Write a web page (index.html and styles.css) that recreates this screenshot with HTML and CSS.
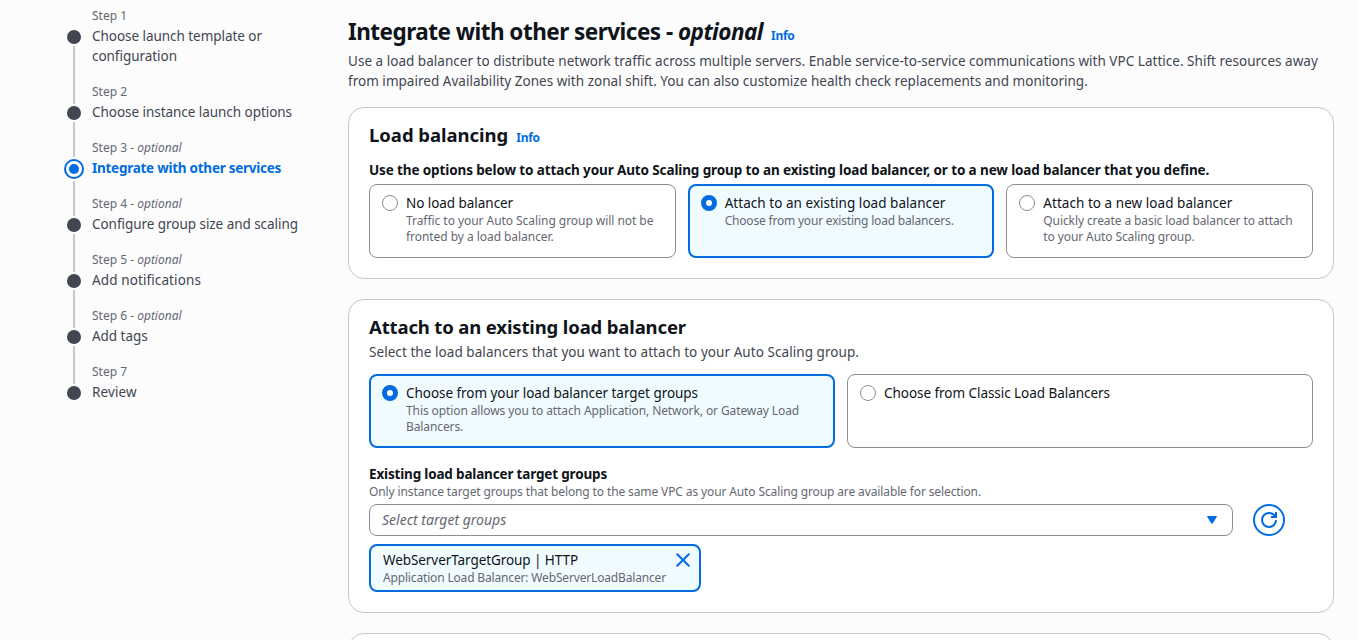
FILE: index.html
```html
<!DOCTYPE html>
<html lang="en">
<head>
<meta charset="utf-8">
<title>Create Auto Scaling group</title>
<link rel="stylesheet" href="styles.css">
</head>
<body>
<div class="layout">
  <nav class="steps">
    <div class="step step-first">
      <div class="rail"><i class="line-top"></i><i class="dot"></i><i class="line"></i></div>
      <div class="step-text"><div class="step-label">Step 1</div><div class="step-title">Choose launch template or<br>configuration</div></div>
    </div>
    <div class="step">
      <div class="rail"><i class="line-top"></i><i class="dot"></i><i class="line"></i></div>
      <div class="step-text"><div class="step-label">Step 2</div><div class="step-title">Choose instance launch options</div></div>
    </div>
    <div class="step step-active">
      <div class="rail"><i class="line-top"></i><i class="dot"></i><i class="line"></i></div>
      <div class="step-text"><div class="step-label">Step 3 - <em>optional</em></div><div class="step-title">Integrate with other services</div></div>
    </div>
    <div class="step">
      <div class="rail"><i class="line-top"></i><i class="dot"></i><i class="line"></i></div>
      <div class="step-text"><div class="step-label">Step 4 - <em>optional</em></div><div class="step-title">Configure group size and scaling</div></div>
    </div>
    <div class="step">
      <div class="rail"><i class="line-top"></i><i class="dot"></i><i class="line"></i></div>
      <div class="step-text"><div class="step-label">Step 5 - <em>optional</em></div><div class="step-title title-loose">Add notifications</div></div>
    </div>
    <div class="step">
      <div class="rail"><i class="line-top"></i><i class="dot"></i><i class="line"></i></div>
      <div class="step-text"><div class="step-label">Step 6 - <em>optional</em></div><div class="step-title">Add tags</div></div>
    </div>
    <div class="step step-last">
      <div class="rail"><i class="line-top"></i><i class="dot"></i></div>
      <div class="step-text"><div class="step-label">Step 7</div><div class="step-title title-loose">Review</div></div>
    </div>
  </nav>

  <main class="content">
    <header class="page-header">
      <div class="heading-row"><h1 class="page-title">Integrate with other services - <em>optional</em></h1><a class="info">Info</a></div>
      <p class="page-desc">Use a load balancer to distribute network traffic across multiple servers. Enable service-to-service communications with VPC Lattice. Shift resources away<br>from impaired Availability Zones with zonal shift. You can also customize health check replacements and monitoring.</p>
    </header>

    <section class="card">
      <div class="heading-row"><h2 class="card-title title-lb">Load balancing</h2><a class="info">Info</a></div>
      <div class="field-label label-options">Use the options below to attach your Auto Scaling group to an existing load balancer, or to a new load balancer that you define.</div>
      <div class="tiles tiles-3">
        <div class="tile">
          <span class="radio"></span>
          <div><div class="tile-title title-tight">No load balancer</div><div class="tile-desc desc-loose">Traffic to your Auto Scaling group will not be<br>fronted by a load balancer.</div></div>
        </div>
        <div class="tile selected">
          <span class="radio"></span>
          <div><div class="tile-title">Attach to an existing load balancer</div><div class="tile-desc desc-tight">Choose from your existing load balancers.</div></div>
        </div>
        <div class="tile">
          <span class="radio"></span>
          <div><div class="tile-title">Attach to a new load balancer</div><div class="tile-desc">Quickly create a basic load balancer to attach<br>to your Auto Scaling group.</div></div>
        </div>
      </div>
    </section>

    <section class="card">
      <h2 class="card-title">Attach to an existing load balancer</h2>
      <p class="card-desc">Select the load balancers that you want to attach to your Auto Scaling group.</p>
      <div class="tiles tiles-2">
        <div class="tile selected">
          <span class="radio"></span>
          <div><div class="tile-title title-tight">Choose from your load balancer target groups</div><div class="tile-desc">This option allows you to attach Application, Network, or Gateway Load<br>Balancers.</div></div>
        </div>
        <div class="tile">
          <span class="radio"></span>
          <div><div class="tile-title title-tight">Choose from Classic Load Balancers</div></div>
        </div>
      </div>
      <div class="field">
        <div class="field-label label-field">Existing load balancer target groups</div>
        <div class="field-desc">Only instance target groups that belong to the same VPC as your Auto Scaling group are available for selection.</div>
        <div class="control-row">
          <div class="select">
            <span class="placeholder">Select target groups</span>
            <svg class="icon" viewBox="0 0 16 16"><path d="M3.5 4.5h9L8.4 11.2h-.8z" fill="#006ce0" stroke="#006ce0" stroke-linejoin="round"/></svg>
          </div>
          <button class="refresh" aria-label="Refresh">
            <svg class="icon" viewBox="0 0 16 16" fill="none" stroke="#006ce0" stroke-width="2"><path d="M10 5h5V0"/><path d="M15 8a7 7 0 0 1-7 7 7 7 0 0 1-7-7 7 7 0 0 1 7-7 6.87 6.87 0 0 1 6.3 4"/></svg>
          </button>
        </div>
        <div class="token">
          <div><div class="token-title">WebServerTargetGroup | HTTP</div><div class="token-desc">Application Load Balancer: WebServerLoadBalancer</div></div>
          <svg class="icon token-close" viewBox="0 0 16 16" fill="none" stroke="#006ce0" stroke-width="2" stroke-linecap="round"><path d="M2.2 2.2l11.6 11.6M13.8 2.2L2.2 13.8"/></svg>
        </div>
      </div>
    </section>

    <section class="card card-next"></section>
  </main>
</div>
</body>
</html>
```

FILE: styles.css
```css
* { box-sizing: border-box; }
body {
  margin: 0;
  background: #fcfcfd;
  color: #0f141a;
  font: 13.5px/20px "Noto Sans", "Open Sans", sans-serif;
  white-space: nowrap;
}
h1, h2, p { margin: 0; }

.layout { display: grid; grid-template-columns: 284px 986px; height: 640px; padding: 8px 0 0 64px; overflow: hidden; }

/* Step navigation */
.steps { display: flex; flex-direction: column; }
.step { display: grid; grid-template-columns: 20px 1fr; column-gap: 8px; }
.rail { display: flex; flex-direction: column; align-items: center; gap: 2px; }
.line-top { flex: none; width: 2px; height: 20px; background: #c6c6cd; }
.line { flex: 1; width: 2px; background: #c6c6cd; }
.dot { flex: none; width: 14px; height: 14px; border-radius: 50%; background: #424650; }
.step-first .line-top { visibility: hidden; }
.step-active .line-top { height: 17px; }
.step-active .dot {
  width: 20px;
  height: 20px;
  border: 2px solid #006ce0;
  padding: 3px;
  background: #006ce0 content-box;
}
.step-text { padding-bottom: 18px; }
.step-label { margin-bottom: 2px; font-size: 12px; line-height: 16px; color: #656871; }
.step-title { color: #424650; letter-spacing: -0.045px; }
.title-loose { letter-spacing: 0.11px; }
.step-active .step-title { color: #006ce0; font-weight: 700; letter-spacing: -0.26px; }

/* Page header */
.content { display: flex; flex-direction: column; gap: 20px; padding-top: 9px; }
.page-header { margin-bottom: -4px; }
.heading-row { display: flex; align-items: baseline; gap: 8px; }
.page-title { font-size: 22.5px; line-height: 30px; font-weight: 700; letter-spacing: -0.52px; }
.info { font-size: 12px; line-height: 16px; font-weight: 700; color: #006ce0; letter-spacing: -0.28px; }
.page-desc { margin-top: 4px; color: #424650; letter-spacing: 0.025px; }

/* Cards */
.card { flex: none; padding: 15px 20px 20px; border: 1px solid #c6c6cd; border-radius: 16px; background: #fff; }
.card-next { height: 80px; }
.card-title { font-size: 18.5px; line-height: 24px; font-weight: 700; letter-spacing: -0.14px; }
.title-lb { letter-spacing: -0.03px; }
.card-desc { margin: 3px 0 12px; color: #424650; letter-spacing: 0.062px; }
.field-label { font-weight: 700; }
.label-options { margin: 13px 0 4px; letter-spacing: -0.12px; }
.label-field { letter-spacing: -0.172px; }

/* Radio tiles */
.tiles { display: grid; gap: 12px; }
.tiles-3 { grid-template-columns: repeat(3, 1fr); }
.tiles-2 { grid-template-columns: repeat(2, 1fr); }
.tile {
  display: flex;
  gap: 8px;
  min-height: 74px;
  padding: 8px 12px 12px;
  border: 1px solid #8c8c94;
  border-radius: 8px;
  background: #fff;
}
.selected { padding: 7px 11px 11px; border: 2px solid #006ce0; background: #f0fbff; }
.radio { flex: none; width: 16px; height: 16px; margin-top: 2px; border: 1px solid #8c8c94; border-radius: 50%; background: #fff; }
.selected .radio { border: 5px solid #006ce0; }
.tile-title { letter-spacing: 0.045px; }
.title-tight { letter-spacing: -0.048px; }
.tile-desc { font-size: 12px; line-height: 16px; color: #656871; letter-spacing: -0.1px; }
.desc-loose { letter-spacing: -0.05px; }
.desc-tight { letter-spacing: -0.193px; }

/* Target group field */
.field { margin-top: 16px; }
.field-desc { margin-bottom: 4px; font-size: 12px; line-height: 16px; color: #656871; letter-spacing: -0.12px; }
.control-row { display: flex; gap: 20px; }
.select {
  display: flex;
  align-items: center;
  justify-content: space-between;
  width: 864px;
  height: 32px;
  padding: 0 12px;
  border: 1px solid #8c8c94;
  border-radius: 8px;
  background: #fff;
}
.placeholder { font-size: 14px; font-style: italic; color: #656871; }
.icon { display: block; flex: none; width: 16px; height: 16px; }
.refresh {
  display: grid;
  place-items: center;
  width: 32px;
  height: 32px;
  padding: 0;
  border: 2px solid #006ce0;
  border-radius: 50%;
  background: #fff;
}
.token {
  display: flex;
  justify-content: space-between;
  width: 332px;
  height: 48px;
  margin-top: 8px;
  padding: 4px 8px 4px 12px;
  border: 2px solid #006ce0;
  border-radius: 8px;
  background: #f0fbff;
}
.token-title { letter-spacing: -0.072px; }
.token-desc { font-size: 12px; line-height: 16px; color: #656871; letter-spacing: -0.163px; }
.token-close { margin-top: 2px; }
```
